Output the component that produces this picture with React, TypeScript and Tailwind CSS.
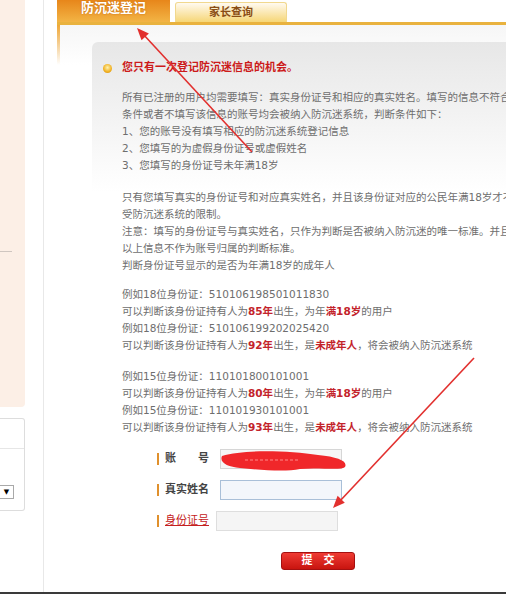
import React from 'react';

const red = 'text-[#c3232b] font-bold';

function Line({ children }: { children: React.ReactNode }) {
  return <div className="whitespace-nowrap h-[17px] leading-[17px]">{children}</div>;
}

function FormRow({ label, labelClass, labelWidth, inputClass }: { label: string; labelClass: string; labelWidth: string; inputClass: string }) {
  return (
    <div className="flex items-center h-[20px]">
      <div className={`flex items-center ${labelWidth}`}>
        <div className="w-[2px] h-[12px] bg-[#e0902c]" />
        <span className={`ml-[6px] text-[11px] ${labelClass}`}>{label}</span>
      </div>
      <div className={`h-[20px] w-[122px] border ${inputClass}`} />
    </div>
  );
}

export default function App() {
  return (
    <div className="relative w-[506px] h-[594px] overflow-hidden bg-white font-['DejaVu_Sans','Noto_Sans_CJK_SC',sans-serif]">
      <div className="flex h-[592px]">
        {/* left sidebar remains */}
        <div className="w-[25px] shrink-0 flex flex-col">
          <div className="h-[407px] bg-[#fcefe6] rounded-br-[4px]">
            <div className="mt-[251px] h-px w-[12px] bg-[#cfc6c0]" />
          </div>
          <div className="mt-[11px] h-[93px] border border-l-0 border-[#dddddd] rounded-r-[3px] bg-white flex flex-col">
            <div className="h-[30px] border-b border-[#e6e6e6]" />
            <div className="mt-[36px] w-[14px] h-[14px] border border-[#a9a9a9] border-l-0 bg-white flex items-center justify-center text-[7px] text-black leading-none">▼</div>
          </div>
        </div>
        <div className="w-[18px] shrink-0" />
        <div className="w-px shrink-0 bg-[#e8e8e8]" />
        <div className="w-[13px] shrink-0" />

        {/* main */}
        <div className="flex-1 min-w-0 flex flex-col overflow-hidden">
          <div className="h-[22px] flex items-end shrink-0">
            <div className="w-[113px] h-[22px] bg-[linear-gradient(to_bottom,#e7861a,#f2b445)] flex items-start justify-center">
              <span className="text-[13px] font-bold text-white leading-none mt-[1px] [text-shadow:0_0_2px_#c46a10]">防沉迷登记</span>
            </div>
            <div className="ml-[5px] w-[112px] h-[20px] rounded-t-[3px] border border-b-0 border-[#f1d88e] bg-[linear-gradient(to_bottom,#fffaf0,#f6d676)] flex items-center justify-center">
              <span className="text-[11px] font-bold text-[#8a4d14] mt-[2px]">家长查询</span>
            </div>
          </div>
          <div className="h-[3px] shrink-0 bg-[#e9b23e]" />

          <div className="flex-1 flex bg-[linear-gradient(to_bottom,#f6f6f6,#ffffff_40px)]">
            <div className="w-[3px] h-[40px] shrink-0 bg-[linear-gradient(to_bottom,#f0a838,rgba(255,255,255,0))]" />
            <div className="w-[32px] shrink-0" />
            <div className="flex-1 mt-[17px] rounded-tl-[6px] bg-[linear-gradient(to_bottom,#e7e7e7,#ffffff_150px)] pt-[18px] text-[10.5px] text-[#6e6e6e]">
              <div className="flex items-center h-[17px]">
                <div className="ml-[11px] w-[9px] h-[9px] rounded-full bg-[radial-gradient(circle_at_50%_40%,#fff3b0,#f0b020_60%,#d08a10)]" />
                <span className="ml-[10px] whitespace-nowrap text-[11px] font-bold text-[#cc1a1a]">您只有一次登记防沉迷信息的机会。</span>
              </div>

              <div className="pl-[30px]">
                <div className="mt-[12px]">
                  <Line>所有已注册的用户均需要填写：真实身份证号和相应的真实姓名。填写的信息不符合要求的</Line>
                  <Line>条件或者不填写该信息的账号均会被纳入防沉迷系统，判断条件如下：</Line>
                  <Line>1、您的账号没有填写相应的防沉迷系统登记信息</Line>
                  <Line>2、您填写的为虚假身份证号或虚假姓名</Line>
                  <Line>3、您填写的身份证号未年满18岁</Line>
                </div>
                <div className="mt-[15px]">
                  <Line>只有您填写真实的身份证号和对应真实姓名，并且该身份证对应的公民年满18岁才不会</Line>
                  <Line>受防沉迷系统的限制。</Line>
                  <Line>注意：填写的身份证号与真实姓名，只作为判断是否被纳入防沉迷的唯一标准。并且</Line>
                  <Line>以上信息不作为账号归属的判断标准。</Line>
                  <Line>判断身份证号显示的是否为年满18岁的成年人</Line>
                </div>
                <div className="mt-[12px]">
                  <Line>例如18位身份证：510106198501011830</Line>
                  <Line>可以判断该身份证持有人为<span className={red}>85年</span>出生，为年<span className={red}>满18岁</span>的用户</Line>
                  <Line>例如18位身份证：510106199202025420</Line>
                  <Line>可以判断该身份证持有人为<span className={red}>92年</span>出生，是<span className={red}>未成年人</span>，将会被纳入防沉迷系统</Line>
                </div>
                <div className="mt-[14px]">
                  <Line>例如15位身份证：110101800101001</Line>
                  <Line>可以判断该身份证持有人为<span className={red}>80年</span>出生，为年<span className={red}>满18岁</span>的用户</Line>
                  <Line>例如15位身份证：110101930101001</Line>
                  <Line>可以判断该身份证持有人为<span className={red}>93年</span>出生，是<span className={red}>未成年人</span>，将会被纳入防沉迷系统</Line>
                </div>

                <div className="mt-[13px] ml-[35px] flex flex-col gap-[11px]">
                  <FormRow label="账　　号" labelClass="font-bold text-[#444]" labelWidth="w-[63px]" inputClass="border-[#d6d6d6] bg-[#f6f6f6]" />
                  <FormRow label="真实姓名" labelClass="font-bold text-[#444]" labelWidth="w-[63px]" inputClass="border-[#a9bfd8] bg-[#f3f6fb]" />
                  <FormRow label="身份证号" labelClass="text-[#c42020] underline" labelWidth="w-[59px]" inputClass="border-[#dedede] bg-[#f5f5f5]" />
                </div>

                <div className="mt-[21px] ml-[159px] w-[74px] h-[18px] rounded-[3px] border border-[#a51010] bg-[linear-gradient(to_bottom,#ef3b33,#c8140f)] flex items-center justify-center">
                  <span className="text-[11px] font-bold text-white">提　交</span>
                </div>
              </div>
            </div>
          </div>
        </div>
      </div>
      <div className="h-[2px] bg-[#3a3a3a]" />

      {/* red annotations drawn over the screenshot */}
      <svg className="absolute inset-0 pointer-events-none" width="506" height="594" viewBox="0 0 506 594">
        <line x1="252" y1="152" x2="143" y2="34" stroke="#e2302e" strokeWidth="1.6" />
        <polygon points="137,28 148.9,33.4 141.5,40.2" fill="#e2302e" />
        <line x1="474" y1="358" x2="339" y2="502" stroke="#e2302e" strokeWidth="1.6" />
        <polygon points="333,508 344.8,502.7 337.6,495.8" fill="#e2302e" />
        <path d="M222 456 C245 449, 290 451, 318 455 C338 457, 348 461, 345 467 C340 471, 320 467, 300 469 C285 472, 262 470, 240 468 C228 467, 219 463, 222 456 Z" fill="#f0272a" />
        <path d="M245 460 L300 460" stroke="#ff8a8a" strokeWidth="1" strokeDasharray="3 2" />
      </svg>
    </div>
  );
}
